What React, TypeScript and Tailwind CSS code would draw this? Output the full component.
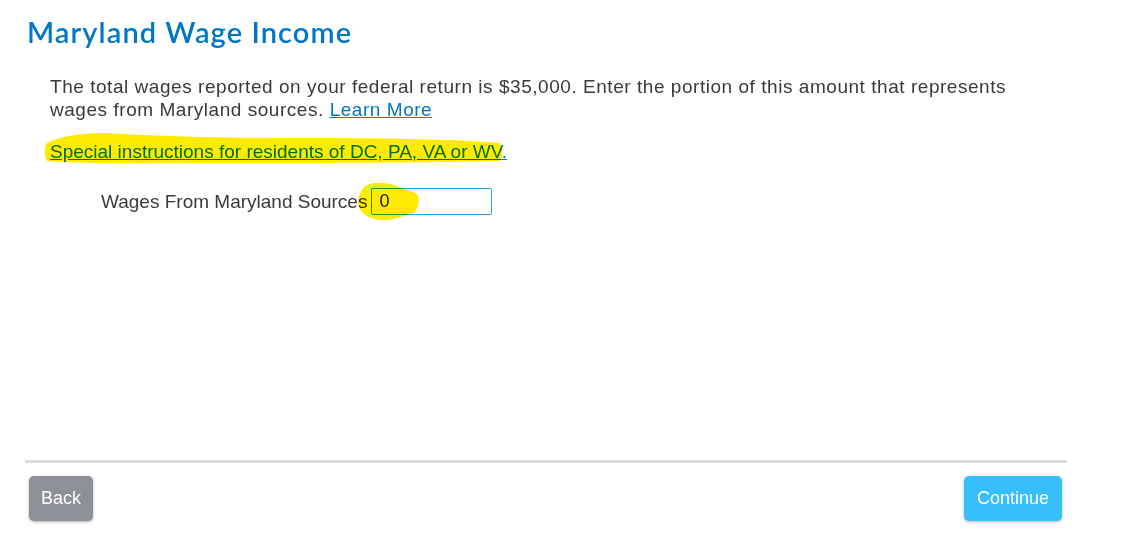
export default function App() {
  return (
    <div className="relative w-[1121px] h-[555px] bg-white overflow-hidden" style={{ fontFamily: '"Liberation Sans", Arial, sans-serif' }}>
      <div className="w-[1042px] ml-[25px] pt-[13px]">
        <h1 className="ml-[2px] text-[29px] leading-[38px] font-semibold tracking-[1.1px] text-[#0077c5]" style={{ fontFamily: 'Lato, "Open Sans", sans-serif' }}>
          Maryland Wage Income
        </h1>

        <div className="pl-[25px] mt-[24px] text-[19px] leading-[23px] text-[#393a3d]">
          <p className="tracking-[0.54px]">
            The total wages reported on your federal return is $35,000. Enter the portion of this amount that represents
            <br />
            wages from Maryland sources.{' '}
            <a href="#" className="text-[#0077c5] underline">Learn More</a>
          </p>

          <p className="mt-[19px] leading-[23px]">
            <a href="#" className="text-[#0077c5] underline">Special instructions for residents of DC, PA, VA or WV</a>
            <span className="text-[#0077c5] underline">.</span>
          </p>

          <div className="flex items-center mt-[25px] pl-[51px]">
            <label className="mr-[4px]">Wages From Maryland Sources</label>
            <div className="w-[121px] h-[27px] border border-[#2ca0e0] rounded-[2px] flex items-center px-[7px] text-[18px] text-[#111]">
              0
            </div>
          </div>
        </div>

        <div className="mt-[245px] h-[3px] bg-[#dcdcdc]" />

        <div className="flex justify-between items-center mt-[13px] pl-[4px] pr-[5px]">
          <button className="h-[45px] px-[12px] rounded-[5px] bg-[#8d9096] text-white text-[18px] shadow-[0_1px_3px_rgba(0,0,0,0.3)]">
            Back
          </button>
          <button className="h-[45px] px-[13px] rounded-[5px] bg-[#36bffa] text-white text-[18px] shadow-[0_1px_3px_rgba(0,0,0,0.3)]">
            Continue
          </button>
        </div>
      </div>

      {/* highlighter marks */}
      <svg className="absolute left-0 top-0 pointer-events-none mix-blend-multiply" width="1121" height="555">
        <path
          d="M47 143 C 60 136, 85 133, 105 133 C 140 135, 200 138, 300 138 C 400 138, 470 140, 500 143 C 503 150, 503 156, 500 161 C 420 163, 300 163, 200 163 C 120 164, 70 163, 47 161 C 44 155, 44 148, 47 143 Z"
          fill="#ffeb00"
        />
        <path
          d="M362 190 C 366 182, 380 181, 394 185 C 404 189, 412 191, 418 195 C 420 201, 418 209, 414 213 C 404 215, 398 219, 388 220 C 376 221, 364 217, 360 209 C 357 203, 358 197, 362 190 Z"
          fill="#ffeb00"
        />
      </svg>
    </div>
  )
}
